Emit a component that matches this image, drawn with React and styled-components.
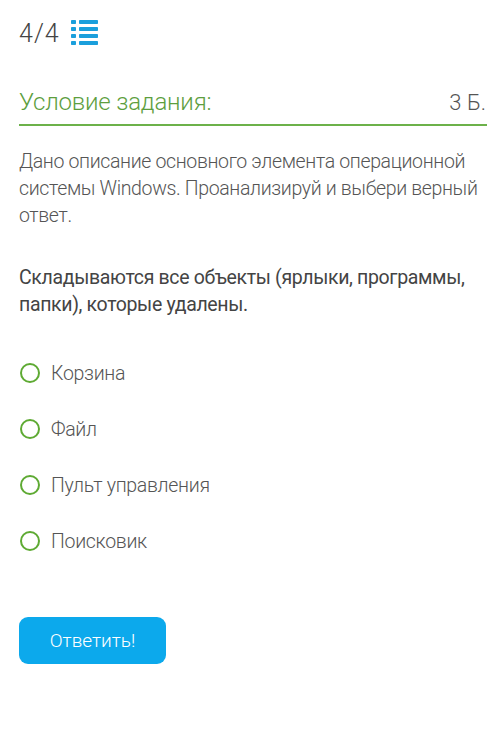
import React from "react";
import styled, { createGlobalStyle } from "styled-components";

const GlobalStyle = createGlobalStyle`
  body {
    margin: 0;
    background: #fff;
    font-family: Roboto, "Liberation Sans", sans-serif;
  }
`;

const options = ["Корзина", "Файл", "Пульт управления", "Поисковик"];

const ListIcon = () => (
  <svg width="27" height="25" viewBox="0 0 27 25">
    {[0, 7, 14, 21].map((y) => (
      <g key={y} fill="#1a9fdc">
        <rect x="0" y={y} width="5" height="4" rx="0.8" />
        <rect x="8" y={y} width="19" height="4" rx="0.8" />
      </g>
    ))}
  </svg>
);

export default function App() {
  return (
    <>
      <GlobalStyle />
      <Page>
        <Counter>
          <span>
            4<Slash>/</Slash>4
          </span>
          <ListIcon />
        </Counter>
        <Header>
          <Title>Условие задания:</Title>
          <Points>3 Б.</Points>
        </Header>
        <Description>
          Дано описание основного элемента операционной системы Windows.
          Проанализируй и выбери верный ответ.
        </Description>
        <Question>
          Складываются все объекты (ярлыки, программы, папки), которые удалены.
        </Question>
        <Options>
          {options.map((o) => (
            <Option key={o}>
              <Radio />
              <span>{o}</span>
            </Option>
          ))}
        </Options>
        <Submit>Ответить!</Submit>
      </Page>
    </>
  );
}

const Page = styled.div`
  width: 500px;
  height: 730px;
  box-sizing: border-box;
  padding: 19px 13px 0 19px;
  background: #fff;
`;

const Counter = styled.div`
  display: flex;
  align-items: center;
  gap: 12px;
  height: 30px;
  font-size: 25px;
  font-weight: 300;
  color: #444;
  line-height: 30px;

  svg {
    margin-top: -3px;
  }
`;

const Slash = styled.span`
  margin: 0 1px;
`;

const Header = styled.div`
  display: flex;
  justify-content: space-between;
  align-items: baseline;
  margin-top: 38px;
  padding-bottom: 7px;
  border-bottom: 2px solid #6cb14a;
`;

const Title = styled.div`
  font-size: 24px;
  font-weight: 300;
  color: #5d9e3e;
  line-height: 30px;
  letter-spacing: -0.2px;
`;

const Points = styled.div`
  font-size: 22px;
  font-weight: 300;
  color: #555;
  margin-right: 1px;
`;

const Description = styled.p`
  margin: 22px -8px 0 0;
  font-size: 19.5px;
  font-weight: 300;
  line-height: 27px;
  letter-spacing: -0.35px;
  color: #555;
`;

const Question = styled.p`
  margin: 35px 0 0;
  font-size: 19.5px;
  font-weight: 400;
  line-height: 27px;
  letter-spacing: -0.35px;
  color: #444;
`;

const Options = styled.div`
  display: flex;
  flex-direction: column;
  gap: 28px;
  margin-top: 41px;
`;

const Option = styled.label`
  display: flex;
  align-items: center;
  gap: 11px;
  height: 28px;
  font-size: 19.5px;
  font-weight: 300;
  letter-spacing: -0.3px;
  color: #555;
`;

const Radio = styled.span`
  width: 16px;
  height: 16px;
  border: 2.5px solid #5eaa33;
  border-radius: 50%;
  margin-left: 1px;
  flex-shrink: 0;
`;

const Submit = styled.button`
  display: block;
  margin-top: 62px;
  width: 147px;
  height: 47px;
  border: none;
  border-radius: 9px;
  background: #0ca9ec;
  color: #fff;
  font-family: Roboto, "Liberation Sans", sans-serif;
  font-size: 19px;
  font-weight: 300;
`;
